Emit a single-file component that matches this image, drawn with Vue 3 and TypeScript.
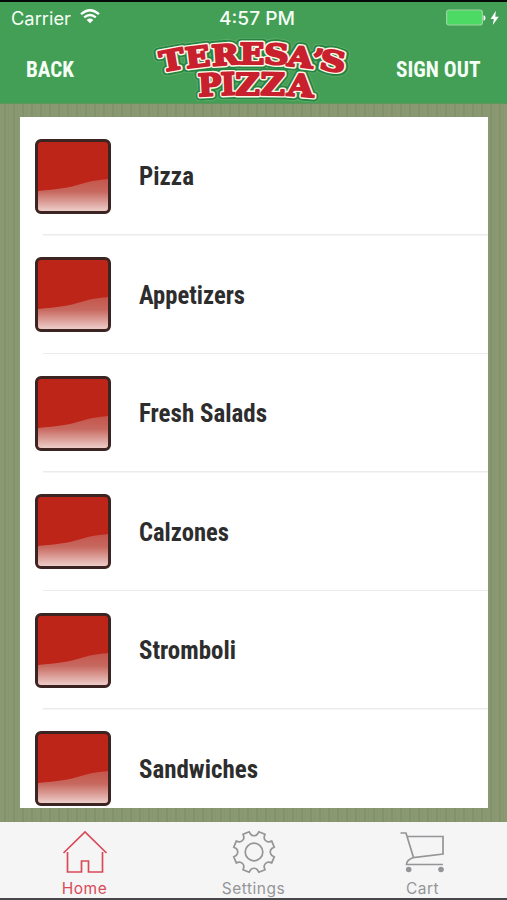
<script setup lang="ts">
interface Glyph {
  ch: string
  x: number
  y: number
  r: number
  w: number
  big?: boolean
}
interface Item {
  name: string
  width: number
}

const items: Item[] = [
  { name: 'Pizza', width: 55 },
  { name: 'Appetizers', width: 106 },
  { name: 'Fresh Salads', width: 128 },
  { name: 'Calzones', width: 90 },
  { name: 'Stromboli', width: 97 },
  { name: 'Sandwiches', width: 119 },
]

// Glyph centres and baselines inside the 204x72 logo box
const glyphs: Glyph[] = [
  { ch: 'T', x: 21.5, y: 36.5, r: -10, w: 25 },
  { ch: 'E', x: 47, y: 33.5, r: -7, w: 25 },
  { ch: 'R', x: 75, y: 31.5, r: -4, w: 28 },
  { ch: 'E', x: 101.5, y: 30.3, r: 0, w: 25 },
  { ch: 'S', x: 126, y: 31, r: 3, w: 25 },
  { ch: 'A', x: 150, y: 33.5, r: 6, w: 26 },
  { ch: '’', x: 167.5, y: 36, r: 8, w: 11 },
  { ch: 'S', x: 182.5, y: 37.5, r: 10, w: 26 },
  { ch: 'P', x: 59, y: 62, r: -3, w: 24, big: true },
  { ch: 'I', x: 77.5, y: 61, r: -2, w: 15, big: true },
  { ch: 'Z', x: 97, y: 61, r: 0, w: 25, big: true },
  { ch: 'Z', x: 122.5, y: 61.3, r: 1, w: 25, big: true },
  { ch: 'A', x: 150.5, y: 62.5, r: 4, w: 27, big: true },
]
const layers: string[] = ['halo', 'shade', 'cream', 'red']

// Eight-tooth cog outline
const cog: string = (() => {
  const pts: string[] = []
  const step = Math.PI / 4
  const at = (r: number, a: number) => `${(22 + r * Math.cos(a)).toFixed(2)} ${(22 + r * Math.sin(a)).toFixed(2)}`
  for (let i = 0; i < 8; i++) {
    const a = (i + 0.5) * step
    pts.push(`${i ? 'L' : 'M'}${at(20.8, a - 0.16)}`)
    pts.push(`L${at(20.8, a + 0.16)}`)
    pts.push(`L${at(18.2, a + 0.2)}`)
    pts.push(`C${at(15.8, a + 0.28)} ${at(15.8, a + step - 0.28)} ${at(18.2, a + step - 0.2)}`)
  }
  return pts.join('') + 'Z'
})()
</script>

<template>
  <main class="screen">
    <header class="top">
      <div class="status">
        <div class="carrier">
          <svg width="70" height="20"><text x="0" y="16" textLength="60" lengthAdjust="spacingAndGlyphs">Carrier</text></svg>
          <svg class="wifi" width="20" height="15" viewBox="0 0 20 15">
            <path d="M1 5.2Q10-2.6 19 5.2M4.2 8.4Q10 3.5 15.8 8.4" fill="none" stroke="#fff" stroke-width="2.3" />
            <path d="M6.7 10.9Q10 8.2 13.3 10.9L10 14.2Z" fill="#fff" />
          </svg>
        </div>
        <svg class="clock" width="80" height="20"><text x="4" y="16" textLength="76" lengthAdjust="spacingAndGlyphs">4:57 PM</text></svg>
        <svg class="battery" width="54" height="18" viewBox="0 0 54 18">
          <rect x=".6" y="1" width="35.800" height="15" rx="2.500" fill="#4cd964" stroke="#9bd49e" stroke-width="1.200" />
          <path d="M37.500 6.200q2 .3 2 2.800t-2 2.800z" fill="#fff" />
          <path d="M49.800 1.800L44.600 10h3.200l-1 6 6-8.300h-3.500z" fill="#fff" />
        </svg>
      </div>
      <nav class="nav">
        <svg class="back" width="50" height="24"><text x="0" y="19" textLength="48" lengthAdjust="spacingAndGlyphs">BACK</text></svg>
        <svg class="logo" width="204" height="72" viewBox="0 0 204 72" role="img">
          <g transform="translate(2.5 .8) scale(.98 1.015)">
            <g v-for="layer in layers" :key="layer" :class="layer">
              <g v-for="(g, i) in glyphs" :key="i" :transform="`translate(${g.x} ${g.y}) rotate(${g.r})`">
                <text :class="{ big: g.big }" :x="-g.w / 2" y="0" :textLength="g.w" lengthAdjust="spacingAndGlyphs">{{ g.ch }}</text>
              </g>
            </g>
          </g>
        </svg>
        <svg class="signout" width="86" height="24"><text x="0" y="19" textLength="84.500" lengthAdjust="spacingAndGlyphs">SIGN OUT</text></svg>
      </nav>
    </header>

    <section class="backdrop">
      <ul class="card">
        <li v-for="item in items" :key="item.name" class="row">
          <span class="thumb">
            <svg width="70" height="69" viewBox="0 0 70 69" preserveAspectRatio="none">
              <defs>
                <linearGradient id="wave" x1="0" y1="0" x2="0" y2="1">
                  <stop offset="0" stop-color="#c4554b" />
                  <stop offset=".4" stop-color="#c7685f" />
                  <stop offset="1" stop-color="#edcdc9" />
                </linearGradient>
              </defs>
              <path d="M0 49C20 47 31 46 43 42C53 39 60 38 70 37V69H0Z" fill="url(#wave)" />
            </svg>
          </span>
          <svg class="label" width="200" height="34">
            <text x="0" y="26" :textLength="item.width" lengthAdjust="spacingAndGlyphs">{{ item.name }}</text>
          </svg>
        </li>
      </ul>
    </section>

    <footer class="tabs">
      <div class="tab active">
        <svg width="46" height="44" viewBox="0 0 46 44">
          <path d="M1.500 23L23 2l21.500 21M5.500 22v20h14V31h7v11h14V22" />
        </svg>
        <span>Home</span>
      </div>
      <div class="tab">
        <svg width="44" height="44" viewBox="0 0 44 44">
          <path :d="cog" />
          <circle cx="22" cy="22" r="8.800" />
        </svg>
        <span>Settings</span>
      </div>
      <div class="tab">
        <svg width="48" height="44" viewBox="0 0 48 44">
          <path d="M1.500 3H7l7.500 24.500L44 24V6.500H8M14.500 27.500Q7.500 30 7.500 34.500H44" />
          <circle class="wheel" cx="9.700" cy="39.500" r="2.800" />
          <circle class="wheel" cx="42" cy="39.500" r="2.800" />
        </svg>
        <span>Cart</span>
      </div>
    </footer>
  </main>
</template>

<style>
body {
  margin: 0;
}
</style>

<style scoped>
.screen {
  width: 507px;
  height: 900px;
  box-sizing: border-box;
  display: flex;
  flex-direction: column;
  overflow: hidden;
  border-top: 2px solid #050b06;
  border-bottom: 2px solid #48484a;
  font-family: Inter, sans-serif;
}
svg {
  display: block;
  overflow: visible;
  flex: none;
}
.top {
  height: 102px;
  flex: none;
  box-sizing: border-box;
  background: #439e56;
  border-bottom: 1px solid #5d965b;
}
.status {
  height: 31px;
  display: grid;
  grid-template-columns: 1fr 80px 1fr;
  padding: 7px 7px 0 11px;
  box-sizing: border-box;
}
.status text {
  fill: #f6fff6;
  font-size: 18px;
}
.carrier {
  display: flex;
}
.wifi {
  margin: 0 0 0 -1px;
}
.clock {
  margin-left: -1px;
}
.clock text {
  font-weight: 500;
}
.battery {
  justify-self: end;
}
.nav {
  display: flex;
  padding: 0 26px;
}
.nav .back,
.nav .signout {
  margin-top: 25px;
}
.back text,
.signout text {
  font: 700 22.500px Roboto, sans-serif;
  font-stretch: 75%;
  fill: #f4fff5;
}
.logo {
  margin: -1px 0 0 74px;
}
.signout {
  margin-left: 42px;
}
.logo text {
  font: 700 27.500px "DejaVu Serif", serif;
  stroke-linejoin: round;
}
.logo .big {
  font-size: 30px;
}
.halo text {
  fill: #62ad69;
  stroke: #62ad69;
  stroke-width: 10px;
}
.shade text {
  fill: #258542;
  stroke: #258542;
  stroke-width: 8.400px;
}
.cream text {
  fill: #fff4e6;
  stroke: #fff4e6;
  stroke-width: 4.800px;
}
.red text {
  fill: #c8202d;
  stroke: #c8202d;
  stroke-width: 2px;
}
.backdrop {
  flex: 1;
  min-height: 0;
  padding: 13px 19px 14px 20px;
  background: repeating-linear-gradient(90deg, #8a9972 0 4px, #82926b 4px 6px, #8a9972 6px 8px, #86966f 8px 9px);
}
.card {
  height: 691px;
  margin: 0;
  padding: 0;
  list-style: none;
  background: #fff;
  overflow: hidden;
}
.row {
  height: 118.500px;
  box-sizing: border-box;
  display: flex;
  align-items: center;
  padding-left: 15px;
  background: linear-gradient(#ebebeb, #ebebeb) 23px 100% / 100% 1.500px no-repeat;
}
.thumb {
  width: 76px;
  height: 75px;
  box-sizing: border-box;
  flex: none;
  border: 3px solid #3b2422;
  border-radius: 6px;
  background: #bd2518;
  overflow: hidden;
}
.label {
  margin: 0 0 0 28px;
}
.label text {
  font: 700 25px Roboto, sans-serif;
  font-stretch: 75%;
  fill: #2d2d2d;
}
.tabs {
  height: 76px;
  flex: none;
  display: grid;
  grid-template-columns: repeat(3, 1fr);
  background: #f5f5f6;
}
.tab {
  display: flex;
  flex-direction: column;
  align-items: center;
  padding-top: 8px;
  color: #959597;
  font-size: 15.500px;
  line-height: 20px;
  letter-spacing: 0.500px;
}
.tab span {
  margin-top: 5px;
}
.tab svg {
  fill: none;
  stroke: currentColor;
  stroke-width: 1.700px;
}
.tab .wheel {
  fill: currentColor;
  stroke: none;
}
.active {
  color: #d94a58;
}
</style>
